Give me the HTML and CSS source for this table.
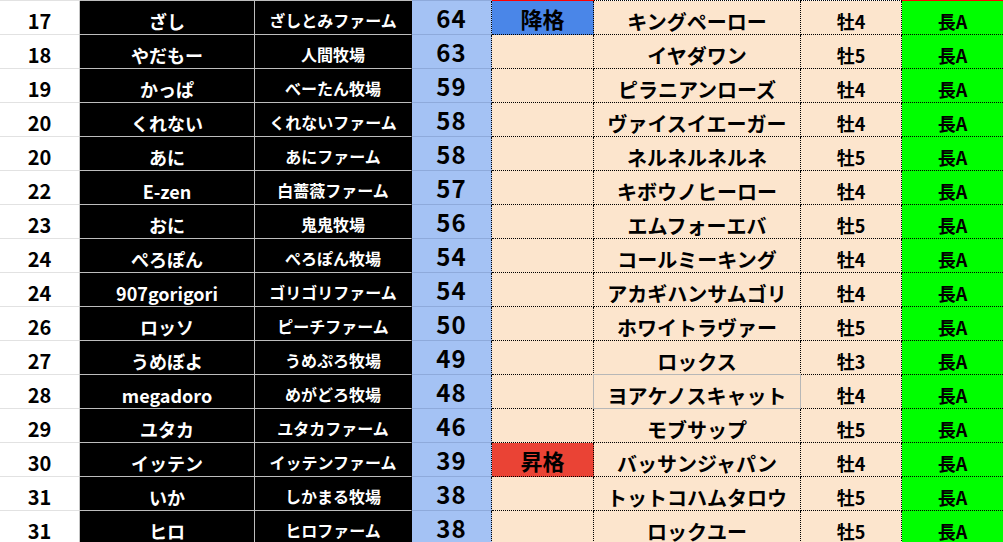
FILE: index.html
```html
<!DOCTYPE html>
<html lang="ja">
<head>
<meta charset="utf-8">
<title>ランキング</title>
<link rel="stylesheet" href="styles.css">
</head>
<body>
<div class="sheet">
  <div class="t ta"></div><div class="t tb"></div><div class="t tc"></div><div class="t td"></div><div class="t te"></div><div class="t tf"></div><div class="t tg"></div><div class="t th"></div>

  <div class="a">17</div><div class="b">ざし</div><div class="c">ざしとみファーム</div><div class="d">64</div><div class="e down">降格</div><div class="f">キングペーロー</div><div class="g">牡4</div><div class="h">長A</div>
  <div class="a">18</div><div class="b">やだもー</div><div class="c">人間牧場</div><div class="d">63</div><div class="e"></div><div class="f">イヤダワン</div><div class="g">牡5</div><div class="h">長A</div>
  <div class="a">19</div><div class="b">かっぱ</div><div class="c">べーたん牧場</div><div class="d">59</div><div class="e"></div><div class="f">ピラニアンローズ</div><div class="g">牡4</div><div class="h">長A</div>
  <div class="a">20</div><div class="b">くれない</div><div class="c">くれないファーム</div><div class="d">58</div><div class="e"></div><div class="f">ヴァイスイエーガー</div><div class="g">牡4</div><div class="h">長A</div>
  <div class="a">20</div><div class="b">あに</div><div class="c">あにファーム</div><div class="d">58</div><div class="e"></div><div class="f">ネルネルネルネ</div><div class="g">牡5</div><div class="h">長A</div>
  <div class="a">22</div><div class="b">E-zen</div><div class="c">白薔薇ファーム</div><div class="d">57</div><div class="e"></div><div class="f">キボウノヒーロー</div><div class="g">牡4</div><div class="h">長A</div>
  <div class="a">23</div><div class="b">おに</div><div class="c">鬼鬼牧場</div><div class="d">56</div><div class="e"></div><div class="f">エムフォーエバ</div><div class="g">牡5</div><div class="h">長A</div>
  <div class="a">24</div><div class="b">ぺろぽん</div><div class="c">ぺろぽん牧場</div><div class="d">54</div><div class="e"></div><div class="f">コールミーキング</div><div class="g">牡4</div><div class="h">長A</div>
  <div class="a">24</div><div class="b">907gorigori</div><div class="c">ゴリゴリファーム</div><div class="d">54</div><div class="e"></div><div class="f">アカギハンサムゴリ</div><div class="g">牡4</div><div class="h">長A</div>
  <div class="a">26</div><div class="b">ロッソ</div><div class="c">ピーチファーム</div><div class="d">50</div><div class="e"></div><div class="f">ホワイトラヴァー</div><div class="g">牡5</div><div class="h">長A</div>
  <div class="a">27</div><div class="b">うめぼよ</div><div class="c">うめぷろ牧場</div><div class="d">49</div><div class="e"></div><div class="f">ロックス</div><div class="g">牡3</div><div class="h">長A</div>
  <div class="a">28</div><div class="b">megadoro</div><div class="c">めがどろ牧場</div><div class="d">48</div><div class="e"></div><div class="f sel">ヨアケノスキャット</div><div class="g">牡4</div><div class="h">長A</div>
  <div class="a">29</div><div class="b">ユタカ</div><div class="c">ユタカファーム</div><div class="d">46</div><div class="e"></div><div class="f">モブサップ</div><div class="g">牡5</div><div class="h">長A</div>
  <div class="a">30</div><div class="b">イッテン</div><div class="c">イッテンファーム</div><div class="d">39</div><div class="e up">昇格</div><div class="f">バッサンジャパン</div><div class="g">牡4</div><div class="h">長A</div>
  <div class="a">31</div><div class="b">いか</div><div class="c">しかまる牧場</div><div class="d">38</div><div class="e"></div><div class="f">トットコハムタロウ</div><div class="g">牡5</div><div class="h">長A</div>
  <div class="a">31</div><div class="b">ヒロ</div><div class="c">ヒロファーム</div><div class="d">38</div><div class="e"></div><div class="f">ロックユー</div><div class="g">牡5</div><div class="h">長A</div>
</div>
</body>
</html>
```

FILE: styles.css
```css
html, body {
  margin: 0;
  padding: 0;
  background: #ffffff;
}

.sheet {
  display: grid;
  grid-template-columns: 80px 175px 157px 80px 102px 207px 101px 101px;
  grid-template-rows: 1px;
  grid-auto-rows: 34px;
  width: 1003px;
  overflow: hidden;
  font-family: "Noto Sans CJK JP", "Noto Sans", sans-serif;
  font-weight: 700;
  color: #000;
}

.sheet > div {
  box-sizing: border-box;
  display: flex;
  justify-content: center;
  align-items: flex-end;
  line-height: 1;
  white-space: nowrap;
}

/* top strip (bottom border of the row above) */
.ta { background: #e2e2e2; }
.tb, .tc { background: #bdbdbd; }
.td { background: #8eaadb; }
.te, .th { background: #ff0000; }
.tf, .tg { border-bottom: 1px dotted #000; }

.a {
  background: #fff;
  border-right: 1px solid #c3c3c3;
  border-bottom: 1px solid #e2e2e2;
  font-size: 20px;
  padding-bottom: 3px;
}

.b {
  background: #000;
  color: #fff;
  border-right: 1px solid #bdbdbd;
  border-bottom: 1px solid #bdbdbd;
  font-size: 18px;
  padding-bottom: 4px;
}

.c {
  background: #000;
  color: #fff;
  border-right: 1px solid #000;
  border-bottom: 1px solid #bdbdbd;
  font-size: 16px;
  padding-bottom: 6px;
}

.d {
  background: #a4c2f4;
  border-right: 1px dotted #000;
  border-bottom: 1px solid #8eaadb;
  font-size: 24px;
  letter-spacing: 1px;
  padding-bottom: 4px;
}

.e, .f, .g {
  background: #fce5cd;
  border-right: 1px dotted #000;
  border-bottom: 1px dotted #000;
}

.e {
  font-size: 22px;
  padding-bottom: 5px;
}

.e.down { background: #4a86e8; }
.e.up { background: #ea4335; }

.f {
  font-size: 20px;
  padding-bottom: 2px;
}

.f.sel {
  border: 1px solid #b7b7b7;
  margin: -1px 0 0 -1px;
  position: relative;
  z-index: 1;
}

.g {
  font-size: 18px;
  padding-bottom: 4px;
}

.h {
  background: #00ff00;
  border-bottom: 1px dotted #000;
  font-size: 18px;
  padding-bottom: 4px;
}
```
